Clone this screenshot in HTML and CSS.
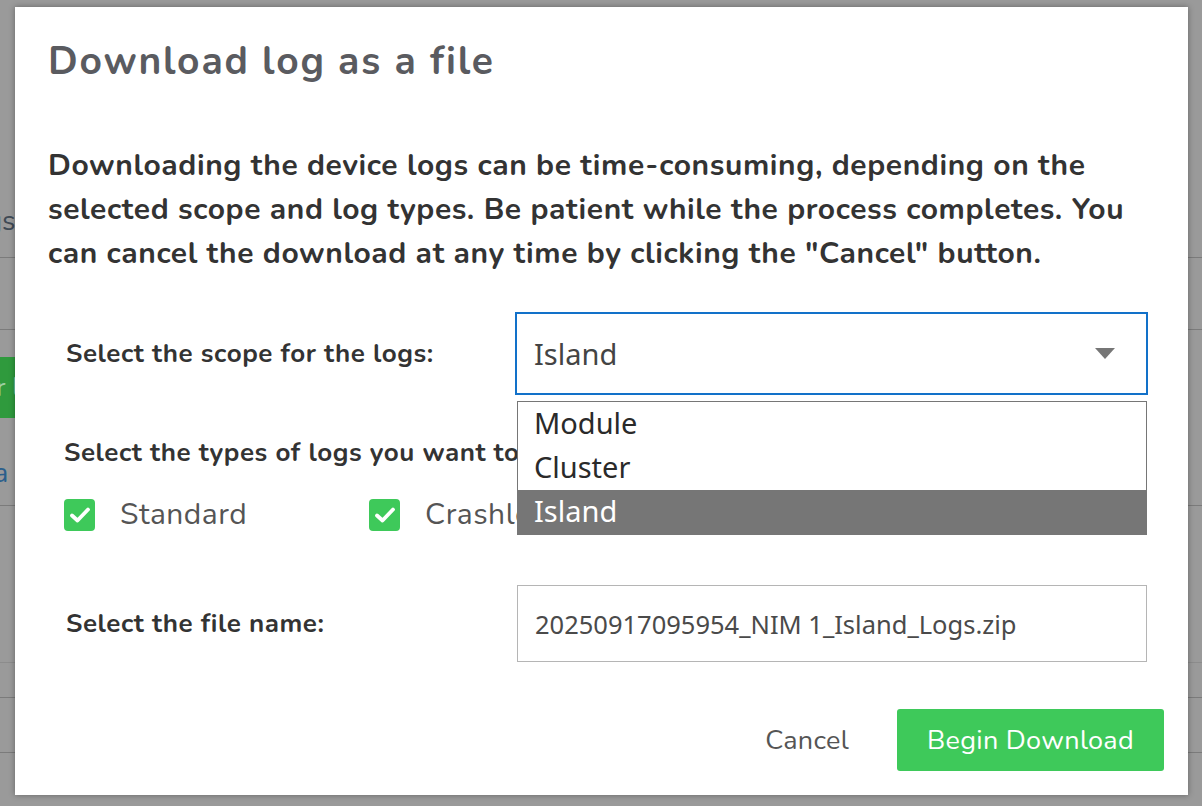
FILE: index.html
```html
<!DOCTYPE html>
<html lang="en">
<head>
<meta charset="utf-8">
<title>Download log as a file</title>
<link rel="stylesheet" href="styles.css">
</head>
<body>
<div class="page">
  <div class="bg-row bg-r1"><span class="bg-text">Logs</span></div>
  <div class="bg-row bg-r2"></div>
  <div class="bg-row bg-r3"><span class="bg-btn">Filter l</span></div>
  <div class="bg-row bg-r4"><span class="bg-link">Data</span></div>
  <div class="bg-row bg-r5"></div>
  <div class="bg-row bg-r6"></div>
  <div class="bg-row bg-r7"></div>
</div>

<div class="modal" role="dialog" aria-labelledby="dlg-title">
  <h1 class="modal-title" id="dlg-title">Download log as a file</h1>
  <p class="modal-intro">Downloading the device logs can be time-consuming, depending on the<br>selected scope and log types. Be patient while the process completes. You<br>can cancel the download at any time by clicking the "Cancel" button.</p>

  <div class="form">
    <div class="form-row scope-row">
      <label class="form-label scope-label">Select the scope for the logs:</label>
      <div class="select-wrap">
        <div class="select-box">
          <span class="select-value">Island</span>
          <svg class="select-arrow" width="20" height="11" viewBox="0 0 20 11"><polygon points="0,0 20,0 10,11" fill="#767676"/></svg>
        </div>
        <ul class="select-list">
          <li class="select-option">Module</li>
          <li class="select-option">Cluster</li>
          <li class="select-option is-active">Island</li>
        </ul>
      </div>
    </div>

    <div class="types">
      <div class="form-label types-label">Select the types of logs you want to download:</div>
      <div class="checks">
        <label class="check">
          <span class="check-box"><svg width="22" height="18" viewBox="0 0 22 18"><path d="M3 9.5 L8.5 14.5 L19 3.5" fill="none" stroke="#fff" stroke-width="3.8" stroke-linecap="round" stroke-linejoin="round"/></svg></span>
          <span class="check-text">Standard</span>
        </label>
        <label class="check">
          <span class="check-box"><svg width="22" height="18" viewBox="0 0 22 18"><path d="M3 9.5 L8.5 14.5 L19 3.5" fill="none" stroke="#fff" stroke-width="3.8" stroke-linecap="round" stroke-linejoin="round"/></svg></span>
          <span class="check-text">Crashlogs</span>
        </label>
      </div>
    </div>

    <div class="form-row file-row">
      <label class="form-label file-label">Select the file name:</label>
      <div class="file-input">20250917095954_NIM 1_Island_Logs.zip</div>
    </div>
  </div>

  <div class="modal-footer">
    <button class="btn-cancel" type="button">Cancel</button>
    <button class="btn-primary" type="button">Begin Download</button>
  </div>
</div>
</body>
</html>
```

FILE: styles.css
```css
* { box-sizing: border-box; }

html, body {
  margin: 0;
  padding: 0;
}

body {
  width: 1202px;
  height: 806px;
  overflow: hidden;
  background: #9a9a9a;
  font-family: "Nunito", "Nunito Sans", Lato, "Open Sans", sans-serif;
  position: relative;
}

/* ---------- background page (behind overlay) ---------- */
.page {
  display: flex;
  flex-direction: column;
  padding-top: 196px;
}

.bg-row {
  border-bottom: 1px solid #7b7b7b;
  display: flex;
  align-items: center;
}

.bg-r1 { height: 62px; align-items: flex-start; padding-top: 6px; }
.bg-r2 { height: 72px; }
.bg-r3 { height: 110px; border-bottom: none; align-items: flex-start; padding-top: 27px; }
.bg-r4 { height: 66px; }
.bg-r5 { height: 157px; border-bottom-color: #8c8c8c; }
.bg-r6 { height: 35px; }
.bg-r7 { height: 55px; }

.bg-text {
  font-size: 28px;
  color: #3f4a55;
  margin-left: -45px;
}

.bg-btn {
  display: inline-block;
  background: #2f9a3d;
  color: #9ed0a4;
  font-size: 26px;
  height: 61px;
  line-height: 61px;
  margin-left: -90px;
  width: 110px;
  text-align: right;
  white-space: nowrap;
  overflow: hidden;
}

.bg-link {
  font-size: 28px;
  color: #2b5f8c;
  margin-left: -52px;
}

/* ---------- modal ---------- */
.modal {
  position: absolute;
  left: 15px;
  top: 7px;
  width: 1173px;
  height: 788px;
  background: #fff;
  box-shadow: 0 0 6px rgba(0, 0, 0, 0.35);
  padding: 28px 40px 0 33px;
  display: flex;
  flex-direction: column;
}

.modal-title {
  margin: 0;
  font-size: 39px;
  font-weight: 700;
  color: #5a5b60;
  line-height: 54px;
  letter-spacing: 1.8px;
}

.modal-intro {
  margin: 55px 0 0;
  font-size: 30px;
  font-weight: 700;
  color: #333;
  line-height: 44px;
  letter-spacing: 0.6px;
  white-space: nowrap;
}

.form {
  margin-top: 36px;
  display: flex;
  flex-direction: column;
}

.form-row {
  display: grid;
  grid-template-columns: 467px 1fr;
  align-items: center;
}

.form-label {
  font-size: 26px;
  font-weight: 700;
  color: #333;
  padding-left: 18px;
  letter-spacing: 0.55px;
  white-space: nowrap;
}

/* select */
.select-wrap {
  position: relative;
}

.select-box {
  height: 83px;
  border: 2px solid #1271c9;
  display: flex;
  align-items: center;
  justify-content: space-between;
  padding: 0 31px 0 17px;
  background: #fff;
}

.select-value,
.select-option,
.file-input {
  font-family: "Segoe UI", "Noto Sans", "Open Sans", sans-serif;
  color: #444;
}

.select-value {
  font-size: 29px;
}

.select-list {
  position: absolute;
  left: 2px;
  right: 1px;
  top: 89px;
  margin: 0;
  padding: 0;
  list-style: none;
  background: #fff;
  border: 1px solid #767676;
  z-index: 2;
}

.select-option {
  height: 44px;
  line-height: 42px;
  font-size: 29px;
  padding-left: 16px;
  color: #2a2a2a;
}

.select-option.is-active {
  background: #767676;
  color: #fff;
}

/* types */
.types {
  margin-top: 40px;
}

.types-label {
  padding-left: 16px;
  line-height: 36px;
}

.checks {
  display: flex;
  margin-top: 23px;
  padding-left: 16px;
}

.check {
  display: flex;
  align-items: center;
  width: 305px;
  gap: 25px;
}

.check-box {
  width: 31px;
  height: 32px;
  border-radius: 4px;
  background: #3ec95a;
  display: flex;
  align-items: center;
  justify-content: center;
}

.check-text {
  font-size: 30px;
  color: #555;
  letter-spacing: 0.5px;
}

/* file */
.file-row {
  margin-top: 50px;
}

.file-input {
  margin-left: 2px;
  margin-right: 1px;
  height: 77px;
  border: 1px solid #b5b5b5;
  display: flex;
  align-items: center;
  padding-left: 17px;
  font-size: 25.5px;
  color: #4a4a4a;
}

/* footer */
.modal-footer {
  margin-top: auto;
  margin-bottom: 24px;
  display: flex;
  justify-content: flex-end;
  align-items: center;
  gap: 48px;
  margin-right: -16px;
}

.btn-cancel {
  background: none;
  border: none;
  font-family: inherit;
  font-size: 27px;
  color: #555;
  padding: 0;
  letter-spacing: 0.3px;
}

.btn-primary {
  width: 267px;
  height: 62px;
  border: none;
  border-radius: 3px;
  background: #3ec95a;
  color: #fff;
  font-family: inherit;
  font-size: 27px;
  letter-spacing: 0.3px;
}
```
